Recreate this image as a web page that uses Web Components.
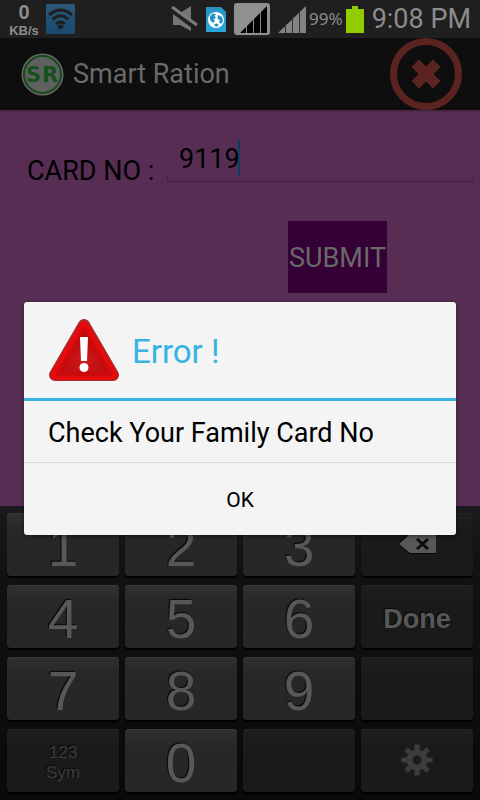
<!DOCTYPE html>
<html lang="en">
<head>
<meta charset="utf-8">
<meta name="viewport" content="width=device-width, initial-scale=1">
<title>Smart Ration</title>
<style>
    body {
        margin: 0;
        background: #0b0c0e;
        font-family: Roboto, "Liberation Sans", sans-serif;
    }
</style>
</head>
<body>
<ration-app></ration-app>

<script>
class StatusBar extends HTMLElement {
    constructor(){
        super();
        this.attachShadow({mode : "open"}).innerHTML = `
            <style>
                :host {
                    display: flex;
                    align-items: center;
                    height: 38px;
                    padding: 0 9px 0 8px;
                    box-sizing: border-box;
                    background: #1f1f1f;
                    color: #8c8c8c;
                }
                svg {
                    display: block;
                    flex: none;
                }
                .speed {
                    width: 32px;
                    margin-right: 6px;
                    font: bold 13px/15px "Liberation Sans", sans-serif;
                    text-align: center;
                }
                .speed b {
                    display: block;
                    font-size: 20px;
                    line-height: 22px;
                }
                .right {
                    display: flex;
                    align-items: center;
                    gap: 8px;
                    margin-left: auto;
                }
                .power {
                    display: flex;
                    align-items: center;
                    gap: 3px;
                    margin-left: -5px;
                    font: 17px/38px "Noto Sans", sans-serif;
                }
                time {
                    font-size: 27px;
                    line-height: 38px;
                }
            </style>
            <div class="speed"><b>0</b>KB/s</div>
            <svg width="29" height="30" viewBox="0 0 29 30">
                <defs>
                    <linearGradient id="wifi" x2="0" y2="1">
                        <stop stop-color="#2d5877"/>
                        <stop offset="1" stop-color="#18496f"/>
                    </linearGradient>
                </defs>
                <rect width="29" height="30" rx="1" fill="url(#wifi)"/>
                <path d="M3 11Q14.500 1 26 11M6.500 15.500Q14.500 8 22.500 15.500M10 20Q14.500 16 19 20" fill="none" stroke="#1d1f22" stroke-width="3"/>
                <path d="M11 22Q14.500 19 18 22L14.500 26Z" fill="#1d1f22"/>
            </svg>
            <div class="right">
                <svg width="27" height="26" viewBox="0 0 27 26">
                    <path d="M2 7H9L20 0V25L9 19H2Z" fill="#747474"/>
                    <path d="M0 4L24 22" stroke="#1f1f1f" stroke-width="4"/>
                    <path d="M1 1L26 19" stroke="#7c7c7c" stroke-width="3"/>
                </svg>
                <svg width="20" height="25" viewBox="0 0 20 25">
                    <defs>
                        <linearGradient id="sim" x2="0" y2="1">
                            <stop stop-color="#2991c4"/>
                            <stop offset="1" stop-color="#27a7dd"/>
                        </linearGradient>
                    </defs>
                    <path d="M0 0H15L20 5V25H0Z" fill="url(#sim)"/>
                    <circle cx="10" cy="13" r="8" fill="#fff"/>
                    <path d="M4 9L7 6.500L10 7L8.500 9L10 11L7.500 12L9 14L7 16L4 13ZM12 8L16 10L17 14L15 17L13 15L14 13L11.500 12ZM8 17L11 16.500L13 18L10 20Z" fill="#2191c6"/>
                </svg>
                <svg width="36" height="32" viewBox="0 0 36 32">
                    <rect width="36" height="32" rx="3" fill="#909090"/>
                    <path d="M6 30L33 3V30Z" fill="#020202"/>
                    <path d="M12.500 20V30M19.500 14V30M26.500 8V30" stroke="#8a8a8a" stroke-width="1"/>
                </svg>
                <svg width="28" height="27" viewBox="0 0 28 27">
                    <path d="M0 27L28 0V27Z" fill="#838383"/>
                    <path d="M7.500 18V27M14.500 10V27M21.500 4V27" stroke="#303030" stroke-width="1"/>
                </svg>
                <div class="power">
                    <span>99%</span>
                    <svg width="18" height="27" viewBox="0 0 18 27">
                        <path d="M0 3H6V0H12V3H18V27H0Z" fill="#91cb00"/>
                    </svg>
                </div>
                <time>9:08 PM</time>
            </div>
        `;
    }
}

class AppBar extends HTMLElement {
    constructor(){
        super();
        this.attachShadow({mode : "open"}).innerHTML = `
            <style>
                :host {
                    display: flex;
                    align-items: center;
                    height: 72px;
                    padding: 0 18px 0 21px;
                    box-sizing: border-box;
                    background: #0e0e0e;
                    color: #6a6a6a;
                }
                svg {
                    display: block;
                }
                h1 {
                    flex: 1;
                    margin: 0 0 0 9px;
                    font-size: 27px;
                    font-weight: 400;
                    line-height: 32px;
                }
                button {
                    padding: 0;
                    border: 0;
                    background: none;
                }
            </style>
            <svg width="43" height="43" viewBox="0 0 43 43">
                <circle cx="21.500" cy="21.500" r="21" fill="#676767"/>
                <circle cx="21.500" cy="21.500" r="18.500" fill="#606060" stroke="#174b19" stroke-width="2"/>
                <text x="5 21" y="29" font-family="DejaVu Sans, sans-serif" font-weight="bold" font-size="21" fill="#15511a">SR</text>
            </svg>
            <h1><slot></slot></h1>
            <button type="button" aria-label="Close">
                <svg width="72" height="72" viewBox="0 0 72 72">
                    <circle cx="36" cy="36" r="32.500" fill="none" stroke="#5b2420" stroke-width="7"/>
                    <path d="M29 22L36 29L43 22L50 29L43 36L50 43L43 50L36 43L29 50L22 43L29 36L22 29Z" fill="#5b2420" stroke="#5b2420" stroke-width="1" stroke-linejoin="round"/>
                </svg>
            </button>
        `;
    }
}

class CardForm extends HTMLElement {
    constructor(){
        super();
        this.attachShadow({mode : "open"}).innerHTML = `
            <style>
                :host {
                    display: block;
                    padding-top: 29px;
                    box-sizing: border-box;
                    background: linear-gradient(#43233f, #572d54 3px);
                    color: #000;
                    font-size: 27px;
                }
                .row {
                    display: flex;
                    height: 48px;
                    padding: 0 6px 0 27px;
                }
                label {
                    align-self: flex-end;
                    width: 140px;
                    line-height: 32px;
                }
                .field {
                    flex: 1;
                }
                .line {
                    display: flex;
                    height: 37px;
                    padding-left: 12px;
                }
                input {
                    field-sizing: content;
                    height: 37px;
                    padding: 2px 0 0;
                    box-sizing: border-box;
                    border: 0;
                    outline: 0;
                    background: none;
                    color: inherit;
                    font: inherit;
                }
                .caret {
                    width: 2px;
                    margin-left: -2px;
                    background: #0c3e63;
                }
                .rule {
                    height: 5px;
                    border: 1px solid #3f203d;
                    border-top: 0;
                }
                button {
                    display: block;
                    height: 72px;
                    margin: 34px 0 0 60%;
                    padding: 2px 1px 0;
                    border: 0;
                    background: #350035;
                    color: #686868;
                    font: inherit;
                }
            </style>
            <form>
                <div class="row">
                    <label for="card">CARD NO :</label>
                    <div class="field">
                        <div class="line">
                            <input id="card" type="tel" value="9119">
                            <span class="caret"></span>
                        </div>
                        <div class="rule"></div>
                    </div>
                </div>
                <button type="button">SUBMIT</button>
            </form>
        `;
    }
}

class PadKey extends HTMLElement {
    constructor(){
        super();
        this.attachShadow({mode : "open"}).innerHTML = `
            <style>
                :host {
                    display: block;
                    --top: #303030;
                    --face: #272727;
                    --edge: #3a3a3a;
                    --ink: #585858;
                    --size: 55px;
                }
                :host([dark]) {
                    --top: #1f1f1f;
                    --face: #1a1a1a;
                    --edge: #262626;
                }
                :host([word]) {
                    --size: 27px;
                }
                :host([dim]) {
                    --ink: #3c3c3c;
                    --size: 17px;
                }
                button {
                    display: flex;
                    align-items: center;
                    justify-content: center;
                    width: 100%;
                    height: 63px;
                    padding: 5px 0 0;
                    border: 0;
                    border-radius: 4px;
                    background: linear-gradient(var(--top), var(--face) 30%, var(--face));
                    box-shadow: inset 0 1px var(--edge), 0 2px 1px #000;
                    color: var(--ink);
                    font: var(--size)/1 "Liberation Sans", Arial, sans-serif;
                    text-shadow: -1px -1px 1px #080808;
                }
                :host([word]) button {
                    font-weight: bold;
                }
                :host([dim]) button {
                    line-height: 20px;
                }
                :host([name]) button {
                    padding: 0 0 2px;
                }
            </style>
            <button type="button"><slot></slot></button>
        `;
    }

    connectedCallback(){
        const name = this.getAttribute("name");
        if (name) {
            this.shadowRoot.querySelector("button").setAttribute("aria-label", name);
        }
    }
}

class KeyPad extends HTMLElement {
    constructor(){
        super();
        this.attachShadow({mode : "open"}).innerHTML = `
            <style>
                :host {
                    display: grid;
                    grid-template-columns: repeat(4, 1fr);
                    gap: 9px 6px;
                    padding: 7px 7px 8px;
                    background: linear-gradient(#191b1c, #101214 20%, #08090b);
                }
                svg {
                    display: block;
                }
            </style>
            <pad-key>1</pad-key>
            <pad-key>2</pad-key>
            <pad-key>3</pad-key>
            <pad-key dark name="Delete">
                <svg width="39" height="22" viewBox="0 0 39 22">
                    <path d="M0 10L11 0H38V21H11Z" fill="#080808"/>
                    <path d="M1 11L12 1H38V20H12Z" fill="#585858"/>
                    <path d="M19 6L30 16M30 6L19 16" stroke="#0c0c0c" stroke-width="3"/>
                </svg>
            </pad-key>
            <pad-key>4</pad-key>
            <pad-key>5</pad-key>
            <pad-key>6</pad-key>
            <pad-key dark word>Done</pad-key>
            <pad-key>7</pad-key>
            <pad-key>8</pad-key>
            <pad-key>9</pad-key>
            <pad-key dark name="Blank"></pad-key>
            <pad-key dark dim>123<br>Sym</pad-key>
            <pad-key>0</pad-key>
            <pad-key dark name="Blank"></pad-key>
            <pad-key dark name="Settings">
                <svg width="32" height="32" viewBox="-16 -16 32 32">
                    <g stroke="#3c3c3c" fill="none">
                        <circle r="7.500" stroke-width="6"/>
                        <path d="M0 -15.500V-8M0 15.500V8M-15.500 0H-8M15.500 0H8M-11 -11L-6 -6M11 11L6 6M-11 11L-6 6M11 -11L6 -6" stroke-width="5"/>
                    </g>
                </svg>
            </pad-key>
        `;
    }
}

class AlertBox extends HTMLElement {
    constructor(){
        super();
        this.attachShadow({mode : "open"}).innerHTML = `
            <style>
                :host {
                    position: absolute;
                    inset: 0;
                    display: grid;
                    align-items: center;
                    padding: 37px 24px 0;
                }
                dialog {
                    position: static;
                    width: auto;
                    margin: 0;
                    padding: 0;
                    border: 0;
                    border-radius: 3px;
                    overflow: hidden;
                    background: #f4f4f4;
                    box-shadow: 0 1px 4px rgba(0, 0, 0, .5);
                    color: #000;
                }
                header {
                    display: flex;
                    align-items: center;
                    gap: 12px;
                    height: 96px;
                    padding: 0 24px;
                    border-bottom: 3px solid #35b4e4;
                    color: #35b4e4;
                }
                h2 {
                    margin: 0;
                    padding-top: 4px;
                    font-size: 33px;
                    font-weight: 400;
                    line-height: 40px;
                }
                p {
                    margin: 0;
                    padding: 16px 24px 13px;
                    border-bottom: 1px solid #d8d8d8;
                    font-size: 27px;
                    line-height: 32px;
                }
                button {
                    display: block;
                    width: 100%;
                    height: 72px;
                    padding: 2px 0 0;
                    border: 0;
                    background: none;
                    color: #000;
                    font: inherit;
                    font-size: 21px;
                }
            </style>
            <dialog open aria-labelledby="title">
                <header>
                    <svg width="72" height="64" viewBox="0 0 72 64">
                        <defs>
                            <radialGradient id="red" cx=".5" cy=".7" r=".6">
                                <stop stop-color="#d01a1d"/>
                                <stop offset="1" stop-color="#b40709"/>
                            </radialGradient>
                        </defs>
                        <path d="M36 7L65 57H7Z" fill="#a03030" stroke="#a03030" stroke-width="12" stroke-linejoin="round"/>
                        <path d="M36 8L65 57H7Z" fill="#e30b0e" stroke="#e30b0e" stroke-width="10" stroke-linejoin="round"/>
                        <path d="M36 12L62 56H10Z" fill="url(#red)" stroke="#cb0a0c" stroke-width="4" stroke-linejoin="round"/>
                        <path d="M32 19H40L39 43H33Z" fill="#fff"/>
                        <circle cx="36" cy="49.500" r="4.500" fill="#fff"/>
                    </svg>
                    <h2 id="title"><slot name="title"></slot></h2>
                </header>
                <p><slot></slot></p>
                <button type="button">OK</button>
            </dialog>
        `;
    }
}

class RationApp extends HTMLElement {
    constructor(){
        super();
        this.attachShadow({mode : "open"}).innerHTML = `
            <style>
                :host {
                    position: relative;
                    display: flex;
                    flex-direction: column;
                    min-height: 100vh;
                }
                card-form {
                    flex: 1;
                }
            </style>
            <status-bar></status-bar>
            <app-bar>Smart Ration</app-bar>
            <card-form></card-form>
            <key-pad></key-pad>
            <alert-box>
                <span slot="title">Error !</span>
                Check Your Family Card No
            </alert-box>
        `;
    }
}

customElements.define("status-bar", StatusBar);
customElements.define("app-bar", AppBar);
customElements.define("card-form", CardForm);
customElements.define("pad-key", PadKey);
customElements.define("key-pad", KeyPad);
customElements.define("alert-box", AlertBox);
customElements.define("ration-app", RationApp);
</script>
</body>
</html>
